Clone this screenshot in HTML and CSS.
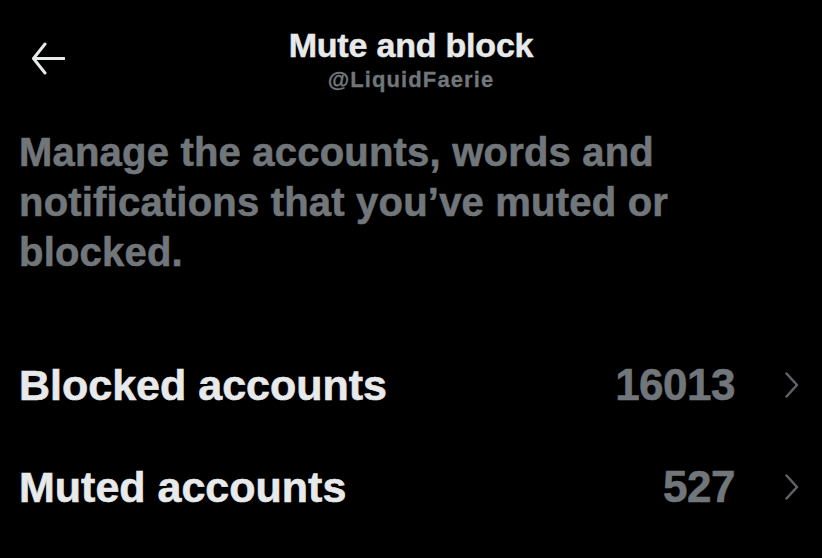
FILE: index.html
```html
<!DOCTYPE html>
<html lang="en">
<head>
    <meta charset="UTF-8">
    <meta name="viewport" content="width=device-width, initial-scale=1.0">
    <title>Mute and block</title>
    <link rel="stylesheet" href="styles.css">
</head>
<body>
    <div class="header">
        <button class="back" aria-label="Back">
            <svg width="34" height="34" viewBox="0 0 34 34">
                <path d="M33 16.5 H3 M14 2 L2.5 16.5 L14 31" fill="none" stroke="#e7e9ea" stroke-width="3" stroke-linecap="round" stroke-linejoin="round"/>
            </svg>
        </button>
        <div class="title">
            <h1>Mute and block</h1>
            <div class="handle">@LiquidFaerie</div>
        </div>
        <div></div>
    </div>

    <p class="intro">Manage the accounts, words and notifications that you’ve muted or blocked.</p>

    <div class="list">
        <div class="row">
            <span class="label">Blocked accounts</span>
            <span class="count">16013</span>
            <svg class="chevron" width="16" height="26" viewBox="0 0 16 26">
                <path d="M2.5 1.5 L13 13 L2.5 24.5" fill="none" stroke="#5f6368" stroke-width="2.5" stroke-linecap="round" stroke-linejoin="round"/>
            </svg>
        </div>
        <div class="row">
            <span class="label">Muted accounts</span>
            <span class="count">527</span>
            <svg class="chevron" width="16" height="26" viewBox="0 0 16 26">
                <path d="M2.5 1.5 L13 13 L2.5 24.5" fill="none" stroke="#5f6368" stroke-width="2.5" stroke-linecap="round" stroke-linejoin="round"/>
            </svg>
        </div>
    </div>
</body>
</html>
```

FILE: styles.css
```css
body {
    font-family: "Liberation Sans", Arial, sans-serif;
    margin: 0;
    padding: 0;
    background-color: #000;
    color: #e7e9ea;
    overflow: hidden;
}
.header {
    display: grid;
    grid-template-columns: 64px 1fr 64px;
    align-items: center;
    padding: 25px 19px 0 19px;
}
.back {
    background: none;
    border: none;
    padding: 0;
    margin-left: 12px;
    width: 34px;
    height: 34px;
    cursor: pointer;
}
.back svg {
    display: block;
}
.title {
    text-align: center;
}
.title h1 {
    margin: 0;
    font-size: 34px;
    line-height: 40px;
    font-weight: bold;
    letter-spacing: -0.2px;
    -webkit-text-stroke: 0.5px #e7e9ea;
}
.handle {
    margin-top: 2px;
    font-size: 22px;
    line-height: 26px;
    font-weight: bold;
    color: #71767b;
    letter-spacing: 1.1px;
    -webkit-text-stroke: 0.3px #71767b;
}
.intro {
    margin: 34px 0 0 0;
    padding: 0 19px;
    font-size: 40px;
    line-height: 50px;
    font-weight: bold;
    color: #71767b;
    letter-spacing: 0.2px;
    -webkit-text-stroke: 0.6px #71767b;
}
.list {
    margin-top: 57px;
}
.row {
    display: flex;
    align-items: center;
    height: 102px;
    padding: 0 22px 0 19px;
}
.label {
    flex: 1;
    font-size: 43px;
    line-height: 52px;
    font-weight: bold;
    -webkit-text-stroke: 0.6px #e7e9ea;
}
.count {
    font-size: 44px;
    line-height: 52px;
    font-weight: bold;
    color: #71767b;
    letter-spacing: -0.5px;
    -webkit-text-stroke: 0.6px #71767b;
}
.chevron {
    display: block;
    margin-left: 49px;
}
```
